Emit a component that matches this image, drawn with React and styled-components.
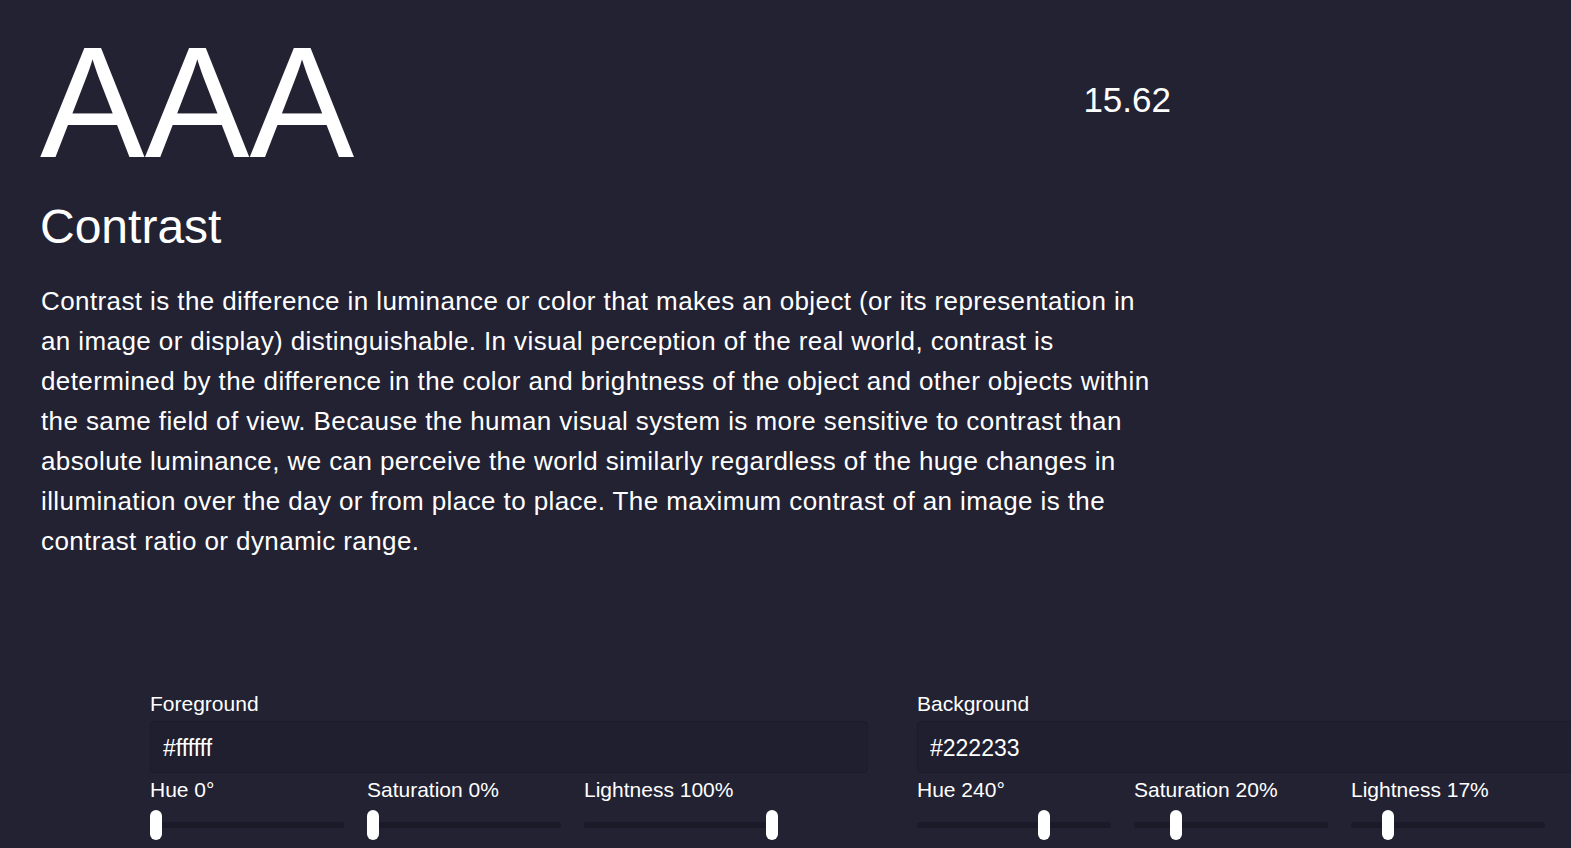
import React from 'react';
import styled, { createGlobalStyle } from 'styled-components';

const GlobalStyle = createGlobalStyle`
  html, body {
    margin: 0;
    padding: 0;
    background: #222233;
    overflow: hidden;
  }

  body {
    color: #fff;
    font-family: 'Liberation Sans', Arial, sans-serif;
  }
`;

const Page = styled.div`
  width: 1571px;
  height: 848px;
  box-sizing: border-box;
  padding: 24px 0 0 40px;
  overflow: hidden;
`;

const Header = styled.div`
  width: 1131px;
  display: flex;
  align-items: center;
  justify-content: space-between;
`;

const Rating = styled.div`
  font-size: 157px;
  line-height: 1;
`;

const Ratio = styled.div`
  font-size: 35px;
  padding-bottom: 6px;
`;

const Title = styled.h2`
  margin: 17px 0 0;
  font-size: 48px;
  font-weight: 400;
  line-height: 1.2;
`;

const Text = styled.p`
  margin: 25px 0 0 1px;
  max-width: 1118px;
  font-size: 26px;
  line-height: 40px;
  letter-spacing: 0.4px;
`;

const Controls = styled.div`
  margin: 131px 0 0 110px;
  display: grid;
  grid-template-columns: 718px 718px;
  column-gap: 49px;
`;

const Column = styled.div`
  display: flex;
  flex-direction: column;
`;

const Label = styled.label`
  display: block;
  font-size: 21px;
`;

const HexInput = styled.input`
  margin-top: 5px;
  height: 52px;
  box-sizing: border-box;
  padding: 4px 12px 0;
  border: 1px solid #1b1b29;
  border-radius: 4px;
  background: #1f1f2f;
  color: #fff;
  font-family: 'Liberation Sans', Arial, sans-serif;
  font-size: 23px;
  outline: none;
`;

const Sliders = styled.div`
  margin-top: 5px;
  display: grid;
  grid-template-columns: repeat(3, 194px);
  column-gap: 23px;
`;

const Slider = styled.div`
  display: flex;
  flex-direction: column;
`;

const Range = styled.input`
  -webkit-appearance: none;
  appearance: none;
  margin: 8px 0 0;
  width: 100%;
  height: 30px;
  background: transparent;

  &::-webkit-slider-runnable-track {
    height: 6px;
    border-radius: 3px;
    background: #1a1a28;
  }

  &::-webkit-slider-thumb {
    -webkit-appearance: none;
    width: 12px;
    height: 30px;
    margin-top: -12px;
    border-radius: 6px;
    background: #fff;
  }
`;

const colors = [
  {
    name: 'Foreground',
    hex: '#ffffff',
    sliders: [
      { label: 'Hue 0°', max: 360, value: 0 },
      { label: 'Saturation 0%', max: 100, value: 0 },
      { label: 'Lightness 100%', max: 100, value: 100 },
    ],
  },
  {
    name: 'Background',
    hex: '#222233',
    sliders: [
      { label: 'Hue 240°', max: 360, value: 240 },
      { label: 'Saturation 20%', max: 100, value: 20 },
      { label: 'Lightness 17%', max: 100, value: 17 },
    ],
  },
];

const App = () => (
  <>
    <GlobalStyle />
    <Page>
      <Header>
        <Rating>AAA</Rating>
        <Ratio>15.62</Ratio>
      </Header>
      <Title>Contrast</Title>
      <Text>
        Contrast is the difference in luminance or color that makes an object
        (or its representation in an image or display) distinguishable. In
        visual perception of the real world, contrast is determined by the
        difference in the color and brightness of the object and other objects
        within the same field of view. Because the human visual system is more
        sensitive to contrast than absolute luminance, we can perceive the
        world similarly regardless of the huge changes in illumination over the
        day or from place to place. The maximum contrast of an image is the
        contrast ratio or dynamic range.
      </Text>
      <Controls>
        {colors.map((c) => (
          <Column key={c.name}>
            <Label>{c.name}</Label>
            <HexInput type="text" defaultValue={c.hex} />
            <Sliders>
              {c.sliders.map((s) => (
                <Slider key={s.label}>
                  <Label>{s.label}</Label>
                  <Range type="range" min={0} max={s.max} defaultValue={s.value} />
                </Slider>
              ))}
            </Sliders>
          </Column>
        ))}
      </Controls>
    </Page>
  </>
);

export default App;
